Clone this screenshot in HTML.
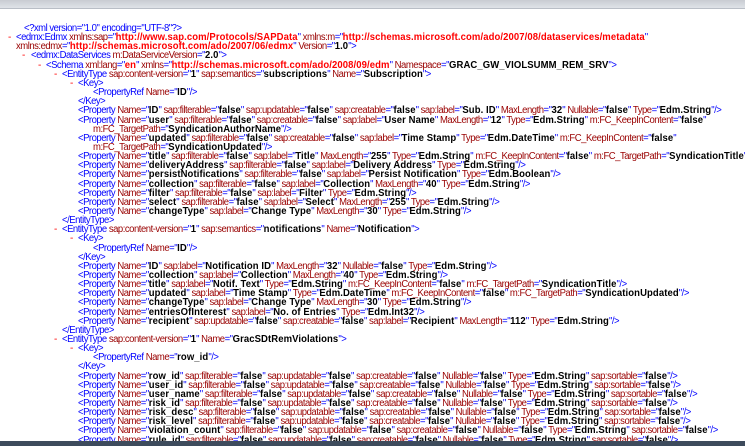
<!DOCTYPE html>
<html><head><meta charset="utf-8"><style>
html,body{margin:0;padding:0;width:745px;height:446px;overflow:hidden;background:#fff}
#top{position:absolute;left:0;top:0;width:745px;height:8px;background:linear-gradient(#c9ccd2,#dfe3e8);border-bottom:1px solid #b9bec6}
#tb{position:absolute;left:0;top:441px;width:745px;height:5px;background:#3d4b5c}
.l{position:absolute;white-space:nowrap;font-family:"Liberation Sans",sans-serif;font-size:10px;line-height:10px;color:#0000ff;letter-spacing:-0.5px;transform-origin:0 0;transform:scaleX(0.95)}
.l i{font-style:normal;color:#990000}
.l b{color:#000;letter-spacing:0.1px}
.l b.r{color:#ff0000}
.m{position:absolute;font-family:"Liberation Sans",sans-serif;font-size:10px;line-height:10px;color:#ff0000}
</style></head><body>
<div id="top"></div>
<div class="l" style="left:24px;top:24px">&lt;?xml version="1.0" encoding="UTF-8"?&gt;</div>
<div class="m" style="left:8px;top:33px">-</div>
<div class="l" style="left:16px;top:33px">&lt;edmx:Edmx <i>xmlns:sap</i>="<b class=r>http://www.sap.com/Protocols/SAPData</b>" <i>xmlns:m</i>="<b class=r>http://schemas.microsoft.com/ado/2007/08/dataservices/metadata</b>"</div>
<div class="l" style="left:16px;top:42px"><i>xmlns:edmx</i>="<b class=r>http://schemas.microsoft.com/ado/2007/06/edmx</b>" <i>Version</i>="<b>1.0</b>"&gt;</div>
<div class="m" style="left:22px;top:51px">-</div>
<div class="l" style="left:31px;top:51px">&lt;edmx:DataServices <i>m:DataServiceVersion</i>="<b>2.0</b>"&gt;</div>
<div class="m" style="left:38px;top:61px">-</div>
<div class="l" style="left:46px;top:61px">&lt;Schema <i>xml:lang</i>="<b class=r>en</b>" <i>xmlns</i>="<b class=r>http://schemas.microsoft.com/ado/2008/09/edm</b>" <i>Namespace</i>="<b>GRAC_GW_VIOLSUMM_REM_SRV</b>"&gt;</div>
<div class="m" style="left:54px;top:70px">-</div>
<div class="l" style="left:62px;top:70px">&lt;EntityType <i>sap:content-version</i>="<b>1</b>" <i>sap:semantics</i>="<b>subscriptions</b>" <i>Name</i>="<b>Subscription</b>"&gt;</div>
<div class="m" style="left:70px;top:79px">-</div>
<div class="l" style="left:78px;top:79px">&lt;Key&gt;</div>
<div class="l" style="left:93px;top:88px">&lt;PropertyRef <i>Name</i>="<b>ID</b>"/&gt;</div>
<div class="l" style="left:78px;top:97px">&lt;/Key&gt;</div>
<div class="l" style="left:78px;top:106px">&lt;Property <i>Name</i>="<b>ID</b>" <i>sap:filterable</i>="<b>false</b>" <i>sap:updatable</i>="<b>false</b>" <i>sap:creatable</i>="<b>false</b>" <i>sap:label</i>="<b>Sub. ID</b>" <i>MaxLength</i>="<b>32</b>" <i>Nullable</i>="<b>false</b>" <i>Type</i>="<b>Edm.String</b>"/&gt;</div>
<div class="l" style="left:78px;top:116px">&lt;Property <i>Name</i>="<b>user</b>" <i>sap:filterable</i>="<b>false</b>" <i>sap:creatable</i>="<b>false</b>" <i>sap:label</i>="<b>User Name</b>" <i>MaxLength</i>="<b>12</b>" <i>Type</i>="<b>Edm.String</b>" <i>m:FC_KeepInContent</i>="<b>false</b>"</div>
<div class="l" style="left:93px;top:125px"><i>m:FC_TargetPath</i>="<b>SyndicationAuthorName</b>"/&gt;</div>
<div class="l" style="left:78px;top:134px">&lt;Property <i>Name</i>="<b>updated</b>" <i>sap:filterable</i>="<b>false</b>" <i>sap:creatable</i>="<b>false</b>" <i>sap:label</i>="<b>Time Stamp</b>" <i>Type</i>="<b>Edm.DateTime</b>" <i>m:FC_KeepInContent</i>="<b>false</b>"</div>
<div class="l" style="left:93px;top:143px"><i>m:FC_TargetPath</i>="<b>SyndicationUpdated</b>"/&gt;</div>
<div class="l" style="left:78px;top:152px">&lt;Property <i>Name</i>="<b>title</b>" <i>sap:filterable</i>="<b>false</b>" <i>sap:label</i>="<b>Title</b>" <i>MaxLength</i>="<b>255</b>" <i>Type</i>="<b>Edm.String</b>" <i>m:FC_KeepInContent</i>="<b>false</b>" <i>m:FC_TargetPath</i>="<b>SyndicationTitle</b>"</div>
<div class="l" style="left:78px;top:161px">&lt;Property <i>Name</i>="<b>deliveryAddress</b>" <i>sap:filterable</i>="<b>false</b>" <i>sap:label</i>="<b>Delivery Address</b>" <i>Type</i>="<b>Edm.String</b>"/&gt;</div>
<div class="l" style="left:78px;top:170px">&lt;Property <i>Name</i>="<b>persistNotifications</b>" <i>sap:filterable</i>="<b>false</b>" <i>sap:label</i>="<b>Persist Notification</b>" <i>Type</i>="<b>Edm.Boolean</b>"/&gt;</div>
<div class="l" style="left:78px;top:180px">&lt;Property <i>Name</i>="<b>collection</b>" <i>sap:filterable</i>="<b>false</b>" <i>sap:label</i>="<b>Collection</b>" <i>MaxLength</i>="<b>40</b>" <i>Type</i>="<b>Edm.String</b>"/&gt;</div>
<div class="l" style="left:78px;top:189px">&lt;Property <i>Name</i>="<b>filter</b>" <i>sap:filterable</i>="<b>false</b>" <i>sap:label</i>="<b>Filter</b>" <i>Type</i>="<b>Edm.String</b>"/&gt;</div>
<div class="l" style="left:78px;top:198px">&lt;Property <i>Name</i>="<b>select</b>" <i>sap:filterable</i>="<b>false</b>" <i>sap:label</i>="<b>Select</b>" <i>MaxLength</i>="<b>255</b>" <i>Type</i>="<b>Edm.String</b>"/&gt;</div>
<div class="l" style="left:78px;top:207px">&lt;Property <i>Name</i>="<b>changeType</b>" <i>sap:label</i>="<b>Change Type</b>" <i>MaxLength</i>="<b>30</b>" <i>Type</i>="<b>Edm.String</b>"/&gt;</div>
<div class="l" style="left:62px;top:216px">&lt;/EntityType&gt;</div>
<div class="m" style="left:54px;top:225px">-</div>
<div class="l" style="left:62px;top:225px">&lt;EntityType <i>sap:content-version</i>="<b>1</b>" <i>sap:semantics</i>="<b>notifications</b>" <i>Name</i>="<b>Notification</b>"&gt;</div>
<div class="m" style="left:70px;top:234px">-</div>
<div class="l" style="left:78px;top:234px">&lt;Key&gt;</div>
<div class="l" style="left:93px;top:244px">&lt;PropertyRef <i>Name</i>="<b>ID</b>"/&gt;</div>
<div class="l" style="left:78px;top:253px">&lt;/Key&gt;</div>
<div class="l" style="left:78px;top:262px">&lt;Property <i>Name</i>="<b>ID</b>" <i>sap:label</i>="<b>Notification ID</b>" <i>MaxLength</i>="<b>32</b>" <i>Nullable</i>="<b>false</b>" <i>Type</i>="<b>Edm.String</b>"/&gt;</div>
<div class="l" style="left:78px;top:271px">&lt;Property <i>Name</i>="<b>collection</b>" <i>sap:label</i>="<b>Collection</b>" <i>MaxLength</i>="<b>40</b>" <i>Type</i>="<b>Edm.String</b>"/&gt;</div>
<div class="l" style="left:78px;top:280px">&lt;Property <i>Name</i>="<b>title</b>" <i>sap:label</i>="<b>Notif. Text</b>" <i>Type</i>="<b>Edm.String</b>" <i>m:FC_KeepInContent</i>="<b>false</b>" <i>m:FC_TargetPath</i>="<b>SyndicationTitle</b>"/&gt;</div>
<div class="l" style="left:78px;top:289px">&lt;Property <i>Name</i>="<b>updated</b>" <i>sap:label</i>="<b>Time Stamp</b>" <i>Type</i>="<b>Edm.DateTime</b>" <i>m:FC_KeepInContent</i>="<b>false</b>" <i>m:FC_TargetPath</i>="<b>SyndicationUpdated</b>"/&gt;</div>
<div class="l" style="left:78px;top:298px">&lt;Property <i>Name</i>="<b>changeType</b>" <i>sap:label</i>="<b>Change Type</b>" <i>MaxLength</i>="<b>30</b>" <i>Type</i>="<b>Edm.String</b>"/&gt;</div>
<div class="l" style="left:78px;top:308px">&lt;Property <i>Name</i>="<b>entriesOfInterest</b>" <i>sap:label</i>="<b>No. of Entries</b>" <i>Type</i>="<b>Edm.Int32</b>"/&gt;</div>
<div class="l" style="left:78px;top:317px">&lt;Property <i>Name</i>="<b>recipient</b>" <i>sap:updatable</i>="<b>false</b>" <i>sap:creatable</i>="<b>false</b>" <i>sap:label</i>="<b>Recipient</b>" <i>MaxLength</i>="<b>112</b>" <i>Type</i>="<b>Edm.String</b>"/&gt;</div>
<div class="l" style="left:62px;top:326px">&lt;/EntityType&gt;</div>
<div class="m" style="left:54px;top:335px">-</div>
<div class="l" style="left:62px;top:335px">&lt;EntityType <i>sap:content-version</i>="<b>1</b>" <i>Name</i>="<b>GracSDtRemViolations</b>"&gt;</div>
<div class="m" style="left:70px;top:344px">-</div>
<div class="l" style="left:78px;top:344px">&lt;Key&gt;</div>
<div class="l" style="left:93px;top:353px">&lt;PropertyRef <i>Name</i>="<b>row_id</b>"/&gt;</div>
<div class="l" style="left:78px;top:362px">&lt;/Key&gt;</div>
<div class="l" style="left:78px;top:372px">&lt;Property <i>Name</i>="<b>row_id</b>" <i>sap:filterable</i>="<b>false</b>" <i>sap:updatable</i>="<b>false</b>" <i>sap:creatable</i>="<b>false</b>" <i>Nullable</i>="<b>false</b>" <i>Type</i>="<b>Edm.String</b>" <i>sap:sortable</i>="<b>false</b>"/&gt;</div>
<div class="l" style="left:78px;top:381px">&lt;Property <i>Name</i>="<b>user_id</b>" <i>sap:filterable</i>="<b>false</b>" <i>sap:updatable</i>="<b>false</b>" <i>sap:creatable</i>="<b>false</b>" <i>Nullable</i>="<b>false</b>" <i>Type</i>="<b>Edm.String</b>" <i>sap:sortable</i>="<b>false</b>"/&gt;</div>
<div class="l" style="left:78px;top:390px">&lt;Property <i>Name</i>="<b>user_name</b>" <i>sap:filterable</i>="<b>false</b>" <i>sap:updatable</i>="<b>false</b>" <i>sap:creatable</i>="<b>false</b>" <i>Nullable</i>="<b>false</b>" <i>Type</i>="<b>Edm.String</b>" <i>sap:sortable</i>="<b>false</b>"/&gt;</div>
<div class="l" style="left:78px;top:399px">&lt;Property <i>Name</i>="<b>risk_id</b>" <i>sap:filterable</i>="<b>false</b>" <i>sap:updatable</i>="<b>false</b>" <i>sap:creatable</i>="<b>false</b>" <i>Nullable</i>="<b>false</b>" <i>Type</i>="<b>Edm.String</b>" <i>sap:sortable</i>="<b>false</b>"/&gt;</div>
<div class="l" style="left:78px;top:408px">&lt;Property <i>Name</i>="<b>risk_desc</b>" <i>sap:filterable</i>="<b>false</b>" <i>sap:updatable</i>="<b>false</b>" <i>sap:creatable</i>="<b>false</b>" <i>Nullable</i>="<b>false</b>" <i>Type</i>="<b>Edm.String</b>" <i>sap:sortable</i>="<b>false</b>"/&gt;</div>
<div class="l" style="left:78px;top:417px">&lt;Property <i>Name</i>="<b>risk_level</b>" <i>sap:filterable</i>="<b>false</b>" <i>sap:updatable</i>="<b>false</b>" <i>sap:creatable</i>="<b>false</b>" <i>Nullable</i>="<b>false</b>" <i>Type</i>="<b>Edm.String</b>" <i>sap:sortable</i>="<b>false</b>"/&gt;</div>
<div class="l" style="left:78px;top:426px">&lt;Property <i>Name</i>="<b>violation_count</b>" <i>sap:filterable</i>="<b>false</b>" <i>sap:updatable</i>="<b>false</b>" <i>sap:creatable</i>="<b>false</b>" <i>Nullable</i>="<b>false</b>" <i>Type</i>="<b>Edm.String</b>" <i>sap:sortable</i>="<b>false</b>"/&gt;</div>
<div class="l" style="left:78px;top:436px">&lt;Property <i>Name</i>="<b>rule_id</b>" <i>sap:filterable</i>="<b>false</b>" <i>sap:updatable</i>="<b>false</b>" <i>sap:creatable</i>="<b>false</b>" <i>Nullable</i>="<b>false</b>" <i>Type</i>="<b>Edm.String</b>" <i>sap:sortable</i>="<b>false</b>"/&gt;</div>
<div id="tb"></div>
</body></html>
